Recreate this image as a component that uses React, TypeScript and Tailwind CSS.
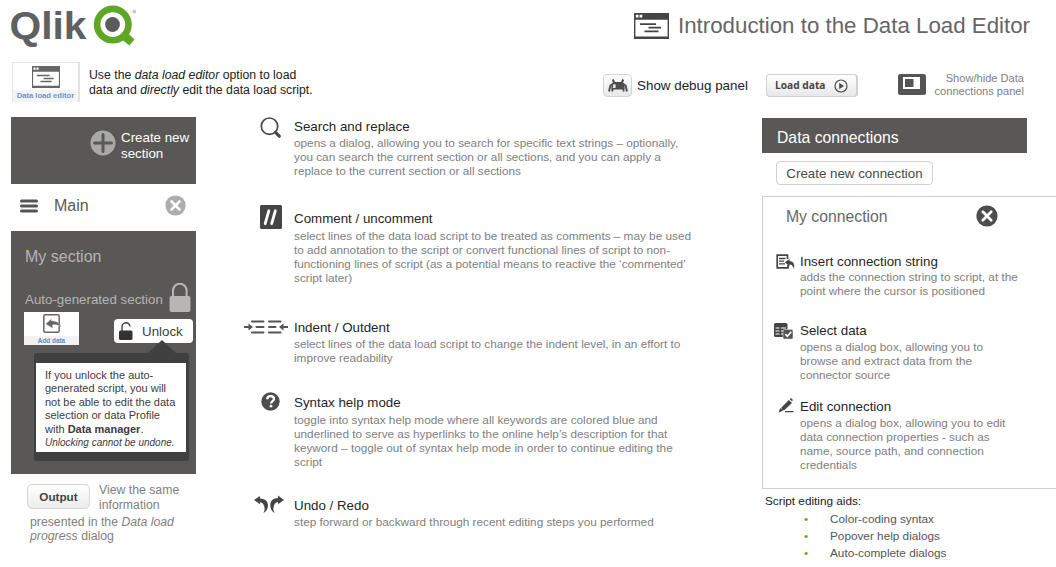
import React from "react";

type IconProps = { className?: string };

const QlikLogo = () => (
  <svg className="block h-[50px] w-[142px]" viewBox="-6 0 142 50">
    <text
      x="-1.5"
      y="38.5"
      fontFamily="'Liberation Sans', Arial, sans-serif"
      fontWeight="700"
      fontSize="39"
      fill="#5f6062"
      textLength="77"
      lengthAdjust="spacingAndGlyphs"
    >
      Qlik
    </text>
    <circle cx="101.800" cy="24.600" r="15.700" fill="none" stroke="#5fa624" strokeWidth="6.600" />
    <path d="M108.500 37.500l6-6.500 9 8.500-5.200 6z" fill="#5fa624" />
    <circle cx="101.500" cy="24.500" r="7.400" fill="#5a5b5e" />
    <circle cx="123.300" cy="11.600" r="1.400" fill="#ccc" stroke="#aaa" strokeWidth="0.6" />
  </svg>
);

const WindowIcon = ({ className }: IconProps) => (
  <svg className={className} viewBox="0 0 35 26" preserveAspectRatio="none">
    <rect x="0.7" y="0.7" width="33.600" height="24.600" fill="#fff" stroke="currentColor" strokeWidth="1.400" />
    <path d="M0 0h35v6.800H0zM0 23.400h35V26H0z" fill="currentColor" />
    <path d="M1.800 1.800h2.700v2.700H1.800zM5.600 1.800h2.700v2.700H5.600z" fill="#fff" />
    <path d="M6 11.200h16M14.500 14.700H27M10.500 18.400h14" stroke="currentColor" strokeWidth="1.800" />
  </svg>
);

const BugIcon = () => (
  <svg className="h-[14px] w-[20px]" viewBox="0 0 20 14" fill="none" stroke="#4d4d4d">
    <path d="M3.500 4.500L6 3h8l2.500 1.500V10.500h-13z" fill="#4d4d4d" stroke="none" />
    <path d="M6.300 4L4.800.5M13.700 4l1.500-3.500" strokeWidth="2" />
    <path d="M4 5.500L2.400 6.500 1 12.500M16 5.500l1.600 1L19 12.500" strokeWidth="1.900" />
    <path d="M4.800 9l-.6 3.500M15.200 9l.6 3.500" strokeWidth="1.800" />
    <path d="M5 5.300h2.600V9H5z" fill="#e8e8e8" stroke="none" />
  </svg>
);

const PlayIcon = () => (
  <svg className="h-[14px] w-[14px]" viewBox="0 0 14 14">
    <circle cx="7" cy="7" r="6" fill="none" stroke="#4d4d4d" strokeWidth="1.200" />
    <path d="M5.200 3.800L10 7l-4.800 3.200z" fill="#4d4d4d" />
  </svg>
);

const PanelIcon = () => (
  <svg className="block h-[21px] w-[28px]" viewBox="0 0 28 21">
    <rect width="28" height="21" rx="2.500" fill="#555" />
    <path d="M5 3h17v12H5z" fill="#fff" />
    <path d="M7 5h8.500v8H7z" fill="#555" />
  </svg>
);

const PlusIcon = () => (
  <svg className="block h-[26px] w-[26px]" viewBox="0 0 26 26">
    <circle cx="13" cy="13" r="12.500" fill="#a9a9a8" />
    <path d="M13 4.500v17M4.500 13h17" stroke="#595856" strokeWidth="3" strokeLinecap="round" />
  </svg>
);

const CloseIcon = ({ className }: IconProps) => (
  <svg className={className} viewBox="0 0 22 22">
    <circle cx="11" cy="11" r="10.600" fill="currentColor" />
    <path d="M6.800 6.800l8.400 8.400M15.200 6.800l-8.400 8.400" stroke="#fff" strokeWidth="2.700" strokeLinecap="round" />
  </svg>
);

const MenuIcon = () => (
  <svg className="block h-[14px] w-[18px]" viewBox="0 0 18 14">
    <path d="M1.500 2h15M1.500 7h15M1.500 12h15" stroke="#555" strokeWidth="3" strokeLinecap="round" />
  </svg>
);

const LockIcon = () => (
  <svg className="block h-[29px] w-[22px]" viewBox="0 0 22 29">
    <path d="M4 15V7.500a6.800 6.800 0 0 1 13.600 0V15" fill="none" stroke="#b5b5b4" strokeWidth="2" />
    <rect x=".5" y="13" width="21" height="16" rx="2" fill="#b5b5b4" />
  </svg>
);

const UnlockIcon = () => (
  <svg className="block h-[18px] w-[14px]" viewBox="0 0 14 18">
    <path d="M3 9V5a4 4 0 0 1 8-.5" fill="none" stroke="#404040" strokeWidth="1.400" />
    <rect x="0" y="8.500" width="13.500" height="9.500" rx="1.500" fill="#333" />
  </svg>
);

const AddDataIcon = () => (
  <svg className="block h-[19px] w-[20px]" viewBox="0 0 20 19">
    <rect x="1.800" y=".8" width="15.400" height="17.400" rx="1.500" fill="#fff" stroke="#666" strokeWidth="1.500" />
    <path
      d="M3.500 10L9.500 4.500v2.300c5 0 8.500 2 10 6.700C17 11 14 10.300 10.500 11l.5 3.500z"
      fill="#666"
      stroke="#fff"
      strokeWidth=".4"
    />
  </svg>
);

const SearchIcon = () => (
  <svg className="block h-[22px] w-[22px]" viewBox="0 0 22 22" fill="none" stroke="#4a4a4a">
    <circle cx="9.500" cy="9.200" r="8.200" strokeWidth="1.700" />
    <path d="M14.500 14.200l2 2" strokeWidth="2" />
    <path d="M16 15.900l3.300 3.300" strokeWidth="3.200" strokeLinecap="round" />
  </svg>
);

const CommentIcon = () => (
  <svg className="block h-[24px] w-[22px]" viewBox="0 0 22 24">
    <rect width="22" height="24" rx="1.500" fill="#454545" />
    <path d="M8.800 5.800L5.200 18.700M15.300 5.800l-3.600 12.900" stroke="#fff" strokeWidth="2.800" strokeLinecap="round" />
  </svg>
);

const IndentIcon = () => (
  <svg className="block h-[14px] w-[45px]" viewBox="0 0 45 14">
    <path
      d="M8 1.500h11.500M12.500 7h7M8 12.500h11.500M25 1.500h11.500M25 7h6.500M25 12.500h11.500"
      stroke="#555"
      strokeWidth="2.100"
      fill="none"
      strokeLinecap="round"
    />
    <path d="M0 7h5M39 7h5" stroke="#555" strokeWidth="2.200" />
    <path d="M4.500 3.500L9 7l-4.500 3.500zM39.500 3.500L35 7l4.500 3.500z" fill="#555" />
  </svg>
);

const HelpIcon = () => (
  <svg className="block h-[19px] w-[19px]" viewBox="0 0 19 19">
    <circle cx="9.500" cy="9.500" r="9.200" fill="#4d4d4d" />
    <path
      d="M6.200 7.300c0-2.200 1.500-3.200 3.400-3.200s3.400 1.100 3.400 2.900c0 2.200-2.900 2.200-2.900 4.400"
      fill="none"
      stroke="#fff"
      strokeWidth="2.300"
    />
    <circle cx="10" cy="14.200" r="1.400" fill="#fff" />
  </svg>
);

const UndoRedoIcon = () => (
  <svg className="block h-[19px] w-[30px]" viewBox="0 0 30 19" fill="#444">
    <path d="M0 5L6 1v2.500c5.500.3 8 2.800 8 7 0 3-1.500 6-4.500 7.500 1.200-2.300 1.500-4.800.7-6.500C9.500 9 8.500 7.500 6 7.300v1.900z" />
    <path d="M30 5l-6-4.500V3c-5.500.3-7.700 3-7.700 7.500 0 3 1.400 6 4.200 7.500-1.200-2.300-1.500-4.800-.7-6.500C20.500 8.800 21.500 7.300 24 7.100v2.200z" />
  </svg>
);

const InsertIcon = () => (
  <svg className="block h-[17px] w-[19px]" viewBox="0 0 19 17">
    <path d="M11.500 5V1.200H1.200v12.600H12V11" fill="none" stroke="#444" strokeWidth="1.700" />
    <path d="M3 4.500h6.500M3 7.200h5M3 9.900h6" stroke="#444" strokeWidth="1.300" />
    <path d="M8.800 8.200l4.700-3.200v2c3.800.3 5.500 2.800 4.500 8.300-.8-3.300-2-4.800-4.500-4.800v1.700z" fill="#444" />
  </svg>
);

const SelectIcon = () => (
  <svg className="block h-[17px] w-[20px]" viewBox="0 0 20 17">
    <rect width="13.500" height="14" rx="1.500" fill="#444" />
    <path d="M1.500 5h4M1.500 8h4M1.500 11h4M7 5h5M7 8h3M7 11h2" stroke="#fff" strokeWidth="1.100" />
    <rect x="9" y="6.500" width="10" height="9.500" rx="1.500" fill="#555" stroke="#ddd" strokeWidth=".6" />
    <path d="M11.300 11l2 2.200 4-4.400" fill="none" stroke="#fff" strokeWidth="1.600" />
  </svg>
);

const EditIcon = () => (
  <svg className="block h-[15px] w-[15px]" viewBox="0 0 15 15">
    <path d="M2.500 9.500L9.800 2l3.200 3-7.500 7-2.800.5z" fill="#444" />
    <path d="M10.800 1.300L12 0l2 2-1.200 1.300z" fill="#444" />
    <path d="M.3 13.700L1.500 11l1.300 1.500zM6 13.600h8.500" fill="#444" stroke="#444" strokeWidth="1.100" />
  </svg>
);

type EntryProps = {
  title: string;
  lines: string[];
  icon: React.ReactNode;
  className: string;
  iconClass: string;
  titleClass?: string;
};

const Entry = ({ title, lines, icon, className, iconClass, titleClass = "h-[18px]" }: EntryProps) => (
  <section className={`flex items-start ${className}`}>
    <div className={`shrink-0 ${iconClass}`}>{icon}</div>
    <div className="whitespace-nowrap">
      <h3 className={`text-[13.33px] leading-[17px] text-[#262626] ${titleClass}`}>{title}</h3>
      {lines.map((line) => (
        <p key={line} className="text-[11.78px] leading-[14px] text-[#808080]">
          {line}
        </p>
      ))}
    </div>
  </section>
);

const Header = () => (
  <header className="flex h-[62px] items-start">
    <div className="ml-[5px] w-[629px]">
      <QlikLogo />
    </div>
    <WindowIcon className="mt-[13px] h-[26px] w-[35px] text-[#454545]" />
    <h1 className="ml-[9px] mt-[11px] text-[22.3px] leading-[30px] whitespace-nowrap text-[#666]">
      Introduction to the Data Load Editor
    </h1>
  </header>
);

const Toolbar = () => (
  <div className="flex h-[55px] items-start whitespace-nowrap">
    <div className="ml-[12px] flex h-[40px] w-[68px] flex-col items-center border-t border-r-2 border-l border-[#e4e4e4] pt-[3px]">
      <WindowIcon className="h-[22px] w-[28px] shrink-0 text-[#666]" />
      <span className="mt-[2px] w-full bg-[#f2f4f6] text-center text-[7.6px] leading-[12px] font-bold text-[#6b95cb]">
        Data load editor
      </span>
    </div>
    <p className="ml-[9px] mt-[6px] w-[514px] text-[12.27px] leading-[15px] text-[#222]">
      Use the <em>data load editor</em> option to load
      <br />
      data and <em>directly</em> edit the data load script.
    </p>
    <button className="mt-[12px] flex h-[23px] w-[29px] items-center justify-center rounded-[4px] border border-[#d5d5d5] bg-linear-to-b from-white to-[#e8e8e8]">
      <BugIcon />
    </button>
    <span className="ml-[5px] mt-[15px] w-[129px] text-[13.4px] leading-[17px] text-[#222]">Show debug panel</span>
    <button className="mt-[12px] flex h-[23px] w-[92px] items-center rounded-[4px] border border-r-2 border-[#d0d0d0] bg-linear-to-b from-white to-[#e8e8e8] pl-[8px] font-['Open_Sans',sans-serif] text-[10.2px] font-bold text-[#444]">
      <span className="w-[59px] text-left">Load data</span>
      <PlayIcon />
    </button>
    <div className="mt-[12px] ml-[40px]">
      <PanelIcon />
    </div>
    <p className="mt-[10px] ml-[8px] w-[90px] text-right text-[11.1px] leading-[13px] text-[#808080]">
      Show/hide Data
      <br />
      connections panel
    </p>
  </div>
);

const Sections = () => (
  <aside className="ml-[11px] w-[185px] shrink-0 whitespace-nowrap">
    <div className="flex h-[67px] items-start bg-[#595856] pl-[79px] text-white">
      <div className="mt-[13px]">
        <PlusIcon />
      </div>
      <p className="mt-[13px] ml-[5px] text-[13.33px] leading-[16px]">
        Create new
        <br />
        section
      </p>
    </div>
    <div className="flex h-[47px] items-center bg-white pl-[9px]">
      <div className="mb-[4px]">
        <MenuIcon />
      </div>
      <span className="mb-[4px] ml-[16px] w-[111px] text-[16px] leading-[20px] text-[#595959]">Main</span>
      <CloseIcon className="mb-[4px] h-[21px] w-[21px] text-[#adadad]" />
    </div>
    <div className="h-[243px] bg-[#595856] text-[#b5b5b4]">
      <h2 className="ml-[14px] pt-[16px] text-[16px] leading-[20px]">My section</h2>
      <div className="mt-[16px] ml-[14px] flex h-[30px] items-start">
        <span className="mt-[8px] w-[144px] text-[13.33px] leading-[17px]">Auto-generated section</span>
        <LockIcon />
      </div>
      <div className="flex h-[40px] items-start">
        <div className="mt-[-1px] ml-[13px] flex h-[33px] w-[55px] flex-col items-center bg-white pt-[2px]">
          <AddDataIcon />
          <span className="mt-[3px] w-full bg-[#f0f2f4] text-center text-[6.4px] leading-[9px] font-bold text-[#5b8bc5]">
            Add data
          </span>
        </div>
        <button className="mt-[6px] ml-[35px] flex h-[24px] w-[79px] items-center rounded-[4px] bg-white pl-[5px] text-[13.33px] text-[#404040]">
          <UnlockIcon />
          <span className="mt-[2px] ml-[9px]">Unlock</span>
        </button>
      </div>
      <div className="relative ml-[23px] h-[108px] w-[155px] rounded-[2px] bg-[#404040] pt-[10px] pl-[2px]">
        <svg className="absolute top-[-13px] left-[114px] h-[13px] w-[28px]" viewBox="0 0 28 13">
          <path d="M0 13L14 0l14 13z" fill="#404040" />
        </svg>
        <div className="h-[89px] w-[150px] bg-white pt-[6px] pl-[9px] text-[11px] leading-[13.400px] text-[#3c3c3c]">
          If you unlock the auto-
          <br />
          generated script, you will
          <br />
          not be able to edit the data
          <br />
          selection or data Profile
          <br />
          with <b className="font-bold">Data manager</b>.
          <br />
          <em className="text-[10px]">Unlocking cannot be undone.</em>
        </div>
      </div>
    </div>
    <div className="flex items-start pt-[9px] text-[12.27px] leading-[15px] text-[#808080]">
      <button className="mt-[1px] ml-[16px] flex h-[25px] w-[63px] items-center justify-center rounded-[5px] border border-[#d5d5d5] bg-linear-to-b from-white to-[#ececec] text-[11.7px] font-bold text-[#444]">
        Output
      </button>
      <p className="ml-[9px]">
        View the same
        <br />
        information
      </p>
    </div>
    <p className="mt-[2px] ml-[19px] text-[12.27px] leading-[14px] text-[#808080]">
      presented in the <em>Data load</em>
      <br />
      <em>progress</em> dialog
    </p>
  </aside>
);

const Actions = () => (
  <main className="ml-[48px] w-[518px] shrink-0 pt-px">
    <Entry
      className="h-[92px]"
      iconClass="-mt-[1px] w-[50px] pl-[16px]"
      icon={<SearchIcon />}
      title="Search and replace"
      lines={[
        "opens a dialog, allowing you to search for specific text strings – optionally,",
        "you can search the current section or all sections, and you can apply a",
        "replace to the current section or all sections",
      ]}
    />
    <Entry
      className="h-[109px]"
      iconClass="-mt-[5px] w-[50px] pl-[16px]"
      titleClass="h-[19px]"
      icon={<CommentIcon />}
      title="Comment / uncomment"
      lines={[
        "select lines of the data load script to be treated as comments – may be used",
        "to add annotation to the script or convert functional lines of script to non-",
        "functioning lines of script (as a potential means to reactive the ‘commented’",
        "script later)",
      ]}
    />
    <Entry
      className="h-[75px]"
      iconClass="mt-[1px] w-[50px]"
      icon={<IndentIcon />}
      title="Indent / Outdent"
      lines={["select lines of the data load script to change the indent level, in an effort to", "improve readability"]}
    />
    <Entry
      className="h-[103px]"
      iconClass="-mt-[2px] w-[50px] pl-[17px]"
      titleClass="h-[19px]"
      icon={<HelpIcon />}
      title="Syntax help mode"
      lines={[
        "toggle into syntax help mode where all keywords are colored blue and",
        "underlined to serve as hyperlinks to the online help’s description for that",
        "keyword – toggle out of syntax help mode in order to continue editing the",
        "script",
      ]}
    />
    <Entry
      className="h-[40px]"
      iconClass="-mt-[2px] w-[50px] pl-[10px]"
      icon={<UndoRedoIcon />}
      title="Undo / Redo"
      lines={["step forward or backward through recent editing steps you performed"]}
    />
  </main>
);

const Connections = () => (
  <aside className="min-w-0 flex-1 pt-px whitespace-nowrap">
    <h2 className="h-[35px] w-[265px] bg-[#595856] pt-[10px] pl-[15px] text-[15.75px] leading-[20px] text-white">
      Data connections
    </h2>
    <button className="mt-[8px] ml-[14px] block h-[24px] w-[157px] rounded-[4px] border border-[#d0d0d0] bg-white text-[13.33px] leading-[23px] text-[#484848]">
      Create new connection
    </button>
    <div className="mt-[11px] h-[293px] border border-r-0 border-[#cfcfcf]">
      <div className="flex h-[56px] items-start pl-[23px]">
        <span className="mt-[10px] w-[190px] text-[15.75px] leading-[20px] text-[#686868]">My connection</span>
        <CloseIcon className="mt-[8px] h-[22px] w-[22px] text-[#4d4d4d]" />
      </div>
      <Entry
        className="h-[69px]"
        iconClass="mt-[1px] w-[37px] pl-[13px]"
        titleClass="h-[17px]"
        icon={<InsertIcon />}
        title="Insert connection string"
        lines={["adds the connection string to script, at the", "point where the cursor is positioned"]}
      />
      <Entry
        className="h-[76px]"
        iconClass="mt-[1px] w-[37px] pl-[11px]"
        icon={<SelectIcon />}
        title="Select data"
        lines={["opens a dialog box, allowing you to", "browse and extract data from the", "connector source"]}
      />
      <Entry
        className="h-[80px]"
        iconClass="w-[37px] pl-[16px]"
        icon={<EditIcon />}
        title="Edit connection"
        lines={[
          "opens a dialog box, allowing you to edit",
          "data connection properties - such as",
          "name, source path, and connection",
          "credentials",
        ]}
      />
    </div>
    <div className="pt-[4px] pl-[3px] text-[11.78px] text-[#222]">
      <h3 className="leading-[16px]">Script editing aids:</h3>
      <ul className="pt-[1px] leading-[17px] text-[#555]">
        {["Color-coding syntax", "Popover help dialogs", "Auto-complete dialogs"].map((aid) => (
          <li key={aid} className="flex pl-[39px]">
            <span className="w-[26px] text-[#5fa624]">•</span>
            {aid}
          </li>
        ))}
      </ul>
    </div>
  </aside>
);

export default function App() {
  return (
    <div className="h-[567px] w-[1056px] overflow-hidden bg-white font-['Liberation_Sans',Arial,sans-serif]">
      <Header />
      <Toolbar />
      <div className="flex items-start">
        <Sections />
        <Actions />
        <Connections />
      </div>
    </div>
  );
}
